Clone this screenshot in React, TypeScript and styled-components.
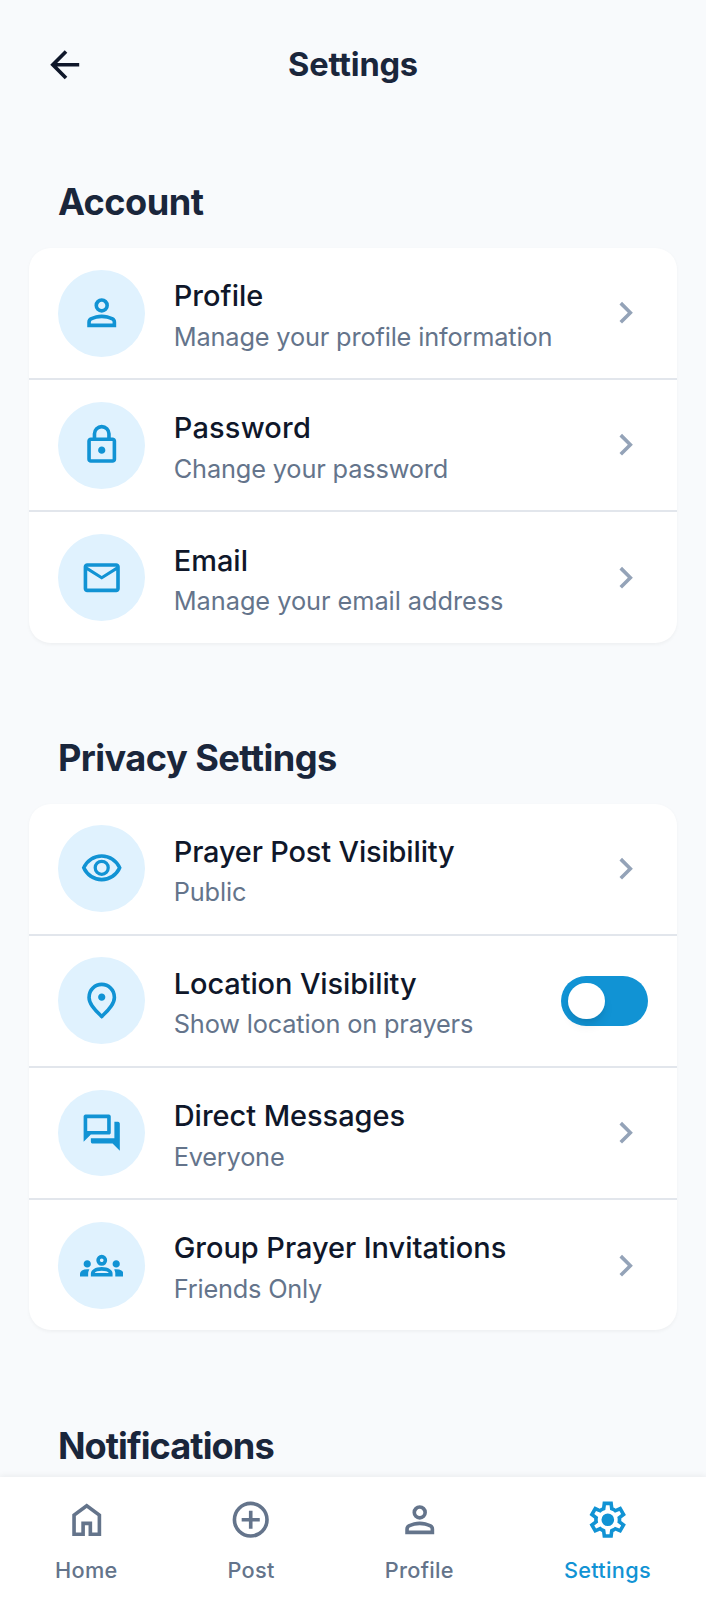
import React, { useState } from 'react';
import styled, { createGlobalStyle } from 'styled-components';

/* 1rem = 16 units of a 390-unit wide layout stretched to the viewport width */
const GlobalStyle = createGlobalStyle`
  *, *::before, *::after { box-sizing: border-box; }
  html { font-size: calc(100vw / 390 * 16); }
  body {
    margin: 0;
    background: #f8fafc;
    font-family: Inter, 'Liberation Sans', sans-serif;
    color: #0f172a;
  }
  button { font: inherit; border: 0; background: none; padding: 0; cursor: pointer; }
`;

const icons = {
  back: 'm313-440 224 224-57 56-320-320 320-320 57 56-224 224h487v80H313Z',
  chevron: 'M504-480 320-664l56-56 240 240-240 240-56-56 184-184Z',
  person:
    'M480-480q-66 0-113-47t-47-113q0-66 47-113t113-47q66 0 113 47t47 113q0 66-47 113t-113 47ZM160-160v-112q0-34 17.5-62.5T224-378q62-31 126-46.5T480-440q66 0 130 15.5T736-378q29 15 46.5 43.5T800-272v112H160Zm80-80h480v-32q0-11-5.5-20T700-306q-54-27-109-40.5T480-360q-56 0-111 13.5T260-306q-9 5-14.5 14t-5.5 20v32Zm240-320q33 0 56.5-23.5T560-640q0-33-23.5-56.5T480-720q-33 0-56.5 23.5T400-640q0 33 23.5 56.5T480-560Z',
  lock: 'M240-80q-33 0-56.5-23.5T160-160v-400q0-33 23.5-56.5T240-640h40v-80q0-83 58.5-141.5T480-920q83 0 141.5 58.5T680-720v80h40q33 0 56.5 23.5T800-560v400q0 33-23.5 56.5T720-80H240Zm0-80h480v-400H240v400Zm240-120q33 0 56.5-23.5T560-360q0-33-23.5-56.5T480-440q-33 0-56.5 23.5T400-360q0 33 23.5 56.5T480-280ZM360-640h240v-80q0-50-35-85t-85-35q-50 0-85 35t-35 85v80Z',
  mail: 'M160-160q-33 0-56.5-23.5T80-240v-480q0-33 23.5-56.5T160-800h640q33 0 56.5 23.5T880-720v480q0 33-23.5 56.5T800-160H160Zm320-280L160-640v400h640v-400L480-440Zm0-80 320-200H160l320 200Z',
  eye: 'M480-320q75 0 127.5-52.5T660-500q0-75-52.5-127.5T480-680q-75 0-127.5 52.5T300-500q0 75 52.5 127.5T480-320Zm0-72q-45 0-76.5-31.5T372-500q0-45 31.5-76.5T480-608q45 0 76.5 31.5T588-500q0 45-31.5 76.5T480-392Zm0 192q-146 0-266-81.5T40-500q54-137 174-218.5T480-800q146 0 266 81.5T920-500q-54 137-174 218.5T480-200Zm0-80q113 0 207.5-59.5T832-500q-50-101-144.5-160.5T480-720q-113 0-207.5 59.5T128-500q50 101 144.5 160.5T480-280Z',
  pin: 'M480-480q33 0 56.5-23.5T560-560q0-33-23.5-56.5T480-640q-33 0-56.5 23.5T400-560q0 33 23.5 56.5T480-480Zm0 294q122-112 181-203.5T720-552q0-109-69.5-178.5T480-800q-101 0-170.5 69.5T240-552q0 71 59 162.5T480-186Zm0 106Q319-217 239.5-334.5T160-552q0-150 96.5-239T480-880q127 0 223.5 89T800-552q0 100-79.5 217.5T480-80Z',
  forum:
    'M280-240q-17 0-28.5-11.5T240-280v-80h520v-360h80q17 0 28.5 11.5T880-680v600L720-240H280ZM80-280v-560q0-17 11.5-28.5T120-880h520q17 0 28.5 11.5T680-840v360q0 17-11.5 28.5T640-440H240L80-280Zm520-240v-280H160v280h440Z',
  groups:
    'M0-240v-63q0-43 44-70t116-27q13 0 25 .5t23 2.5q-14 21-21 44t-7 48v65H0Zm240 0v-65q0-32 17.5-58.5T307-410q32-20 76.5-30t96.5-10q53 0 97.5 10t76.5 30q32 20 49 46.5t17 58.5v65H240Zm540 0v-65q0-26-6.5-49T754-397q11-2 22.5-2.5t23.5-.5q72 0 116 26.5t44 70.5v63H780Zm-455-80h311q-10-20-55.5-35T480-370q-55 0-100.5 15T325-320ZM160-440q-33 0-56.5-23.5T80-520q0-34 23.5-57t56.5-23q34 0 57 23t23 57q0 33-23 56.5T160-440Zm640 0q-33 0-56.5-23.5T720-520q0-34 23.5-57t56.5-23q34 0 57 23t23 57q0 33-23 56.5T800-440Zm-320-40q-50 0-85-35t-35-85q0-51 35-85.5t85-34.5q51 0 85.5 34.5T600-600q0 50-34.5 85T480-480Zm0-80q17 0 28.5-11.5T520-600q0-17-11.5-28.5T480-640q-17 0-28.5 11.5T440-600q0 17 11.5 28.5T480-560Z',
  home: 'M240-200h120v-240h240v240h120v-360L480-740 240-560v360Zm-80 80v-480l320-240 320 240v480H520v-240h-80v240H160Z',
  add: 'M440-280h80v-160h160v-80H520v-160h-80v160H280v80h160v160Zm40 200q-83 0-156-31.5T197-197q-54-54-85.5-127T80-480q0-83 31.5-156T197-763q54-54 127-85.5T480-880q83 0 156 31.5T763-763q54 54 85.5 127T880-480q0 83-31.5 156T763-197q-54 54-127 85.5T480-80Zm0-80q134 0 227-93t93-227q0-134-93-227t-227-93q-134 0-227 93t-93 227q0 134 93 227t227 93Z',
  gear: 'm370-80-16-128q-13-5-24.5-12T307-235l-119 50L78-375l103-78q-1-7-1-13.5v-27q0-6.5 1-13.5L78-585l110-190 119 50q11-8 23-15t24-12l16-128h220l16 128q13 5 24.5 12t22.5 15l119-50 110 190-103 78q1 7 1 13.5v27q0 6.5-2 13.5l103 78-110 190-118-50q-11 8-23 15t-24 12L590-80H370Zm70-80h79l14-106q31-8 57.5-23.5T639-327l99 41 39-68-86-65q5-14 7-29.5t2-31.5q0-16-2-31.5t-7-29.5l86-65-39-68-99 42q-22-23-48.5-38.5T533-694l-13-106h-79l-14 106q-31 8-57.5 23.5T321-633l-99-41-39 68 86 64q-5 15-7 30t-2 32q0 16 2 31t7 30l-86 65 39 68 99-42q22 23 48.5 38.5T427-266l13 106Zm42-180q58 0 99-41t41-99q0-58-41-99t-99-41q-59 0-99.5 41T342-480q0 58 40.5 99t99.5 41Z',
};

type IconName = keyof typeof icons;

const Svg = styled.svg`
  display: block;
  width: 1.5rem;
  height: 1.5rem;
  flex: none;
  fill: currentColor;
`;

const Icon = ({ name }: { name: IconName }) => (
  <Svg viewBox="0 -960 960 960" aria-hidden="true">
    <path d={icons[name]} />
  </Svg>
);

const Screen = styled.div`
  display: flex;
  flex-direction: column;
  height: 100vh;
  overflow: hidden;
`;

const Header = styled.header`
  display: flex;
  align-items: center;
  flex: none;
  height: 4.5rem;
  padding: 0 1.5rem;
`;

const BackButton = styled.button`
  color: #0f172a;
`;

const Title = styled.h1`
  flex: 1;
  margin: 0;
  padding: 0 1.5rem 0.0625rem 0;
  text-align: center;
  font-size: 1.125rem;
  line-height: 1.75rem;
  font-weight: 700;
  letter-spacing: -0.006em;
  color: #1a263b;
`;

const Main = styled.main`
  flex: 1;
  min-height: 0;
  overflow: hidden;
  padding: 0 1rem;
`;

const Section = styled.section`
  padding-top: 1.71875rem;
  & + & { padding-top: 3.21875rem; }
`;

const SectionTitle = styled.h2<{ $tracking?: number }>`
  margin: 0;
  padding: 0 1rem 0.78125rem;
  font-size: 1.25rem;
  line-height: 1.5625rem;
  font-weight: 700;
  letter-spacing: ${(p) => p.$tracking ?? -0.015}em;
  color: #1a263b;
`;

const Card = styled.div`
  overflow: hidden;
  border-radius: 0.75rem;
  background: #fff;
  box-shadow: 0 0.0625rem 0.125rem rgba(0, 0, 0, 0.04);
`;

const Row = styled.div`
  display: flex;
  align-items: center;
  gap: 1rem;
  height: 4.5625rem;
  padding: 0 1rem;
  border-bottom: 2px solid #e2e6ec;
  &:last-child { height: 4.5rem; border-bottom: 0; }
`;

const IconDisc = styled.div`
  display: flex;
  align-items: center;
  justify-content: center;
  flex: none;
  width: 3rem;
  height: 3rem;
  border-radius: 50%;
  background: #e0f2fe;
  color: #1193d4;
`;

const RowText = styled.div`
  flex: 1;
  padding-top: 0.125rem;
`;

const RowTitle = styled.div<{ $tracking?: number }>`
  font-size: 1rem;
  line-height: 1.5rem;
  font-weight: 500;
  letter-spacing: ${(p) => p.$tracking ?? 0}em;
  color: #0f172a;
`;

const RowDetail = styled.div<{ $tracking?: number }>`
  font-size: 0.875rem;
  line-height: 1.3125rem;
  letter-spacing: ${(p) => p.$tracking ?? 0}em;
  color: #64748b;
`;

const Trailing = styled.div`
  color: #94a3b8;
`;

const Track = styled.button<{ $on: boolean }>`
  display: flex;
  align-items: center;
  width: 3rem;
  height: 1.75rem;
  padding: 0 0.25rem;
  border-radius: 0.875rem;
  background: ${(p) => (p.$on ? '#1193d4' : '#cbd5e1')};
`;

const Knob = styled.span`
  width: 1.25rem;
  height: 1.25rem;
  border-radius: 50%;
  background: #fff;
  box-shadow: 0 0.25rem 0.375rem -0.0625rem rgba(0, 0, 0, 0.1), 0 0.125rem 0.25rem -0.125rem rgba(0, 0, 0, 0.1);
`;

const Nav = styled.nav`
  position: relative;
  display: flex;
  justify-content: space-around;
  flex: none;
  height: 4.25rem;
  padding-top: 0.734375rem;
  background: #fff;
  box-shadow: 0 -0.0625rem 0.1875rem rgba(0, 0, 0, 0.05);
`;

const NavItem = styled.a<{ $active?: boolean }>`
  display: flex;
  flex-direction: column;
  align-items: center;
  gap: 0.421875rem;
  font-size: 0.75rem;
  line-height: 1.125rem;
  font-weight: 500;
  letter-spacing: 0.014em;
  color: ${(p) => (p.$active ? '#1193d4' : '#64748b')};
`;

type Item = {
  icon: IconName;
  title: string;
  detail: string;
  toggle?: boolean;
  titleTracking?: number;
  detailTracking?: number;
};

const account: Item[] = [
  { icon: 'person', title: 'Profile', detail: 'Manage your profile information', titleTracking: 0.001, detailTracking: -0.0063 },
  { icon: 'lock', title: 'Password', detail: 'Change your password', titleTracking: 0.007, detailTracking: -0.006 },
  { icon: 'mail', title: 'Email', detail: 'Manage your email address', detailTracking: -0.0016 },
];

const privacy: Item[] = [
  { icon: 'eye', title: 'Prayer Post Visibility', detail: 'Public', titleTracking: -0.0055, detailTracking: -0.006 },
  { icon: 'pin', title: 'Location Visibility', detail: 'Show location on prayers', toggle: true, titleTracking: -0.0035, detailTracking: -0.0065 },
  { icon: 'forum', title: 'Direct Messages', detail: 'Everyone', titleTracking: -0.001, detailTracking: -0.008 },
  { icon: 'groups', title: 'Group Prayer Invitations', detail: 'Friends Only', titleTracking: -0.0012, detailTracking: -0.008 },
];

const tabs: { icon: IconName; label: string; active?: boolean }[] = [
  { icon: 'home', label: 'Home' },
  { icon: 'add', label: 'Post' },
  { icon: 'person', label: 'Profile' },
  { icon: 'gear', label: 'Settings', active: true },
];

function Toggle({ label }: { label: string }) {
  const [on, setOn] = useState(true);
  return (
    <Track $on={on} role="switch" aria-checked={on} aria-label={label} onClick={() => setOn(!on)}>
      <Knob />
    </Track>
  );
}

function SettingsGroup({ title, items }: { title: string; items: Item[] }) {
  return (
    <Section>
      <SectionTitle>{title}</SectionTitle>
      <Card>
        {items.map((item) => (
          <Row key={item.title}>
            <IconDisc>
              <Icon name={item.icon} />
            </IconDisc>
            <RowText>
              <RowTitle $tracking={item.titleTracking}>{item.title}</RowTitle>
              <RowDetail $tracking={item.detailTracking}>{item.detail}</RowDetail>
            </RowText>
            <Trailing>{item.toggle ? <Toggle label={item.title} /> : <Icon name="chevron" />}</Trailing>
          </Row>
        ))}
      </Card>
    </Section>
  );
}

export default function App() {
  return (
    <>
      <GlobalStyle />
      <Screen>
        <Header>
          <BackButton aria-label="Back">
            <Icon name="back" />
          </BackButton>
          <Title>Settings</Title>
        </Header>
        <Main>
          <SettingsGroup title="Account" items={account} />
          <SettingsGroup title="Privacy Settings" items={privacy} />
          <Section>
            <SectionTitle $tracking={-0.026}>Notifications</SectionTitle>
          </Section>
        </Main>
        <Nav>
          {tabs.map((tab) => (
            <NavItem key={tab.label} $active={tab.active}>
              <Icon name={tab.icon} />
              {tab.label}
            </NavItem>
          ))}
        </Nav>
      </Screen>
    </>
  );
}
